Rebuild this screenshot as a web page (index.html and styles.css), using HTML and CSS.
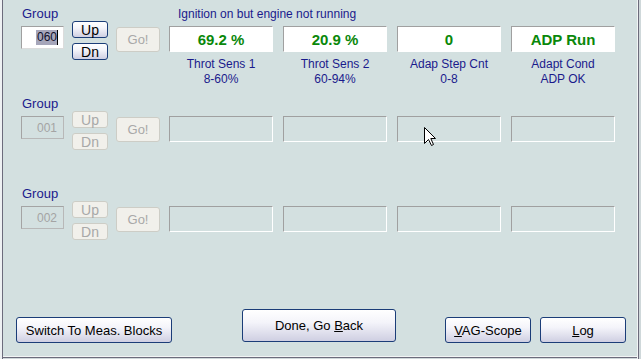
FILE: index.html
```html
<!DOCTYPE html>
<html>
<head>
<meta charset="utf-8">
<link rel="stylesheet" href="styles.css">
</head>
<body>
<div class="win">
  <div class="row">
    <div class="grp">
      <div class="glabel">Group</div>
      <div class="gbox"><span class="sel">060</span><span class="caret"></span></div>
    </div>
    <div class="updn">
      <div class="btn">Up</div>
      <div class="btn">Dn</div>
    </div>
    <div class="go dis">Go!</div>
    <div class="fields">
      <div class="status">Ignition on but engine not running</div>
      <div class="cells">
        <div class="cell"><div class="val">69.2 %</div><div class="lbl">Throt Sens 1<br>8-60%</div></div>
        <div class="cell"><div class="val">20.9 %</div><div class="lbl">Throt Sens 2<br>60-94%</div></div>
        <div class="cell"><div class="val">0</div><div class="lbl">Adap Step Cnt<br>0-8</div></div>
        <div class="cell"><div class="val">ADP Run</div><div class="lbl">Adapt Cond<br>ADP OK</div></div>
      </div>
    </div>
  </div>
  <div class="row">
    <div class="grp">
      <div class="glabel">Group</div>
      <div class="gbox off">001</div>
    </div>
    <div class="updn">
      <div class="btn dis">Up</div>
      <div class="btn dis">Dn</div>
    </div>
    <div class="go dis">Go!</div>
    <div class="fields">
      <div class="status"></div>
      <div class="cells">
        <div class="cell"><div class="val empty"></div></div>
        <div class="cell"><div class="val empty"></div></div>
        <div class="cell"><div class="val empty"></div></div>
        <div class="cell"><div class="val empty"></div></div>
      </div>
    </div>
  </div>
  <div class="row">
    <div class="grp">
      <div class="glabel">Group</div>
      <div class="gbox off">002</div>
    </div>
    <div class="updn">
      <div class="btn dis">Up</div>
      <div class="btn dis">Dn</div>
    </div>
    <div class="go dis">Go!</div>
    <div class="fields">
      <div class="status"></div>
      <div class="cells">
        <div class="cell"><div class="val empty"></div></div>
        <div class="cell"><div class="val empty"></div></div>
        <div class="cell"><div class="val empty"></div></div>
        <div class="cell"><div class="val empty"></div></div>
      </div>
    </div>
  </div>
  <div class="bottom">
    <div class="bbtn switch"><span>Switch To Meas. Blocks</span></div>
    <div class="bbtn done"><span>Done, Go <u>B</u>ack</span></div>
    <div class="bbtn vag"><span><u>V</u>AG-Scope</span></div>
    <div class="bbtn log"><span><u>L</u>og</span></div>
  </div>
  <svg class="cursor" width="13" height="20" viewBox="0 0 13 20">
    <path d="M0.5 0.5 L0.5 16.5 L4.5 12.5 L7.5 18.5 L9.5 17.5 L6.8 11.5 L11.5 11.5 Z" fill="#fff" stroke="#000" stroke-width="1"/>
  </svg>
</div>
</body>
</html>
```

FILE: styles.css
```css
* { box-sizing: border-box; }
body {
  margin: 0;
  background: #d3e0e0;
  font-family: "Liberation Sans", Arial, sans-serif;
}
.win {
  position: relative;
  width: 641px;
  height: 359px;
  background: #d3e0e0;
  box-shadow:
    inset 2px 0 0 #eef1f3,
    inset 3px 0 0 #6c6c7c,
    inset -2px 0 0 #cfd8da,
    inset -3px 0 0 #6c6c7c,
    inset -4px 0 0 #f2f5f5,
    inset 0 -1px 0 #cfd8da,
    inset 0 -2px 0 #6c6c7c,
    inset 0 -3px 0 #f2f5f5;
}
.row {
  display: flex;
  align-items: flex-start;
  height: 90px;
  padding-left: 21px;
}
.grp { width: 43px; }
.glabel {
  margin-top: 7px;
  height: 14px;
  line-height: 14px;
  font-size: 13px;
  color: #1a1a8c;
  padding-left: 1px;
}
.gbox {
  margin-top: 5px;
  width: 43px;
  height: 23px;
  border: 1px solid;
  border-color: #a0a0a0 #dcdcdc #dcdcdc #a0a0a0;
  background: #fff;
  display: flex;
  align-items: center;
  justify-content: flex-end;
  padding-right: 5px;
  font-size: 12px;
  color: #111;
}
.sel {
  background: #a6a6ba;
  color: #10102a;
  line-height: 15px;
  padding: 0 0 0 1px;
}
.caret {
  width: 1px;
  height: 15px;
  background: #000;
}
.gbox.off {
  background: transparent;
  border-color: #a4a4a4 #b8b8b8 #b8b8b8 #a4a4a4;
  color: #a4a4a4;
  padding-right: 6px;
}
.updn {
  margin-left: 8px;
  margin-top: 21px;
  width: 36px;
  display: flex;
  flex-direction: column;
  gap: 5px;
}
.btn, .go, .bbtn {
  display: flex;
  align-items: center;
  justify-content: center;
  border: 1px solid #1b3d78;
  border-radius: 3px;
  background: linear-gradient(#ffffff, #f4f4fa 40%, #cfcfe2);
  color: #000;
}
.btn {
  height: 17px;
  font-size: 14px;
}
.dis {
  border-color: #cdcdc6;
  background: #f1f0eb;
  color: #a8a8a8;
}
.go {
  margin-left: 8px;
  margin-top: 27px;
  width: 44px;
  height: 25px;
  font-size: 13px;
}
.go.dis {
  border-color: #cdcdc6;
  background: #f1f0eb;
  color: #a8a8a8;
}
.fields { margin-left: 9px; }
.status {
  height: 26px;
  line-height: 28px;
  padding-left: 9px;
  font-size: 12px;
  color: #1a1a8c;
  white-space: nowrap;
}
.cells {
  display: flex;
  gap: 10px;
}
.cell { width: 104px; }
.val {
  height: 26px;
  border: 1px solid;
  border-color: #a0a0a0 #ffffff #ffffff #a0a0a0;
  background: #fff;
  text-align: center;
  line-height: 25px;
  font-size: 15px;
  font-weight: bold;
  color: #0a880a;
}
.val.empty { background: transparent; }
.lbl {
  margin-top: 5px;
  text-align: center;
  font-size: 12px;
  line-height: 15px;
  color: #1a1a8c;
}
.bottom {
  display: flex;
  align-items: flex-end;
  margin-top: 39px;
  height: 34px;
  padding-left: 16px;
}
.bbtn {
  height: 26px;
  font-size: 13px;
  white-space: pre;
}
.switch { width: 156px; }
.done { width: 154px; height: 33px; margin-left: 70px; margin-bottom: 1px; }
.vag { width: 86px; margin-left: 49px; }
.log { width: 86px; margin-left: 9px; }
.cursor {
  position: absolute;
  left: 424px;
  top: 127px;
}
```
